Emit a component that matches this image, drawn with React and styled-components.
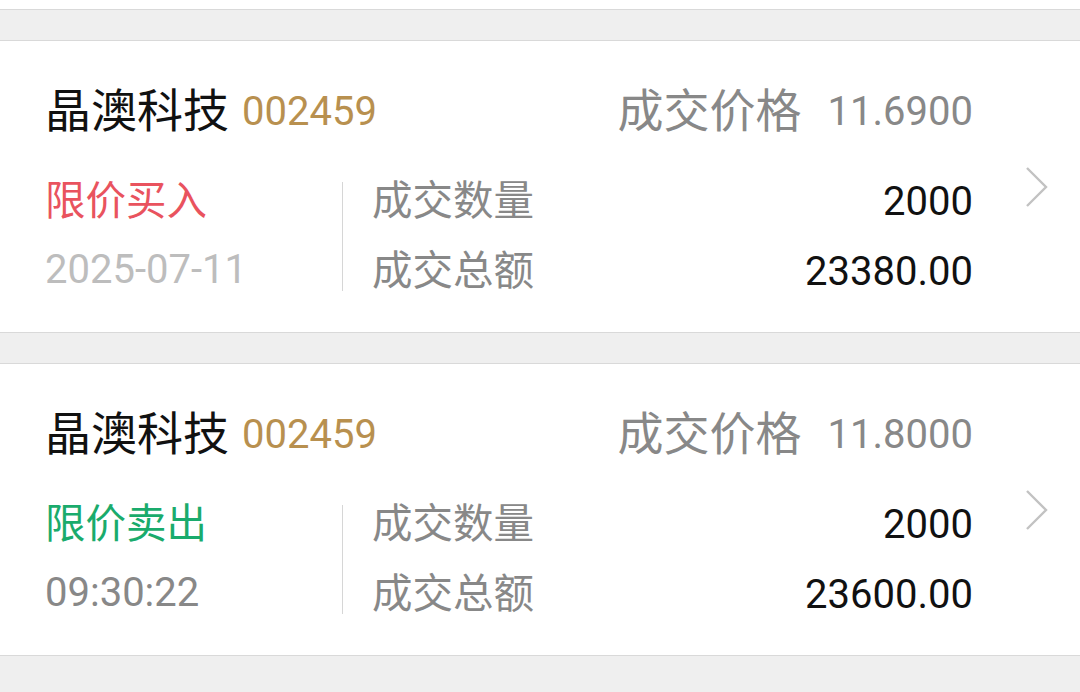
import React from "react";
import styled, { createGlobalStyle } from "styled-components";

const GlobalStyles = createGlobalStyle`
  html, body, #root {
    margin: 0;
    padding: 0;
    background: #efefef;
  }
  body {
    font-family: Roboto, "Noto Sans CJK SC", sans-serif;
    -webkit-font-smoothing: antialiased;
  }
`;

const List = styled.div`
  display: flex;
  flex-direction: column;
  gap: 30px;
  width: 1080px;
`;

// tail of the row scrolled above the viewport
const PrevTail = styled.div`
  height: 9px;
  background: #fff;
  border-bottom: 1px solid #d9d9d9;
`;

const Card = styled.div`
  display: flex;
  align-items: center;
  height: 291px;
  background: #fff;
  border-top: 1px solid #d9d9d9;
  border-bottom: 1px solid #d9d9d9;
  padding: 0 31px 0 45px;
`;

const Content = styled.div`
  flex: 1;
  display: flex;
  flex-direction: column;
  padding: 39px 0 27px;
`;

const Header = styled.div`
  display: flex;
  align-items: center;
  justify-content: space-between;
  height: 60px;
  margin-bottom: 25px;
`;

const Group = styled.div`
  display: flex;
  align-items: center;
  gap: ${(p) => p.$gap}px;
`;

// CJK ink sits a little low in its box, digits a little high; padding evens it out
const Cjk = styled.span`
  font-family: "Noto Sans CJK SC", sans-serif;
  font-weight: 400;
  line-height: 1;
  padding-bottom: ${(p) => p.$lift || 4}px;
`;

const Num = styled.span`
  font-family: Roboto, sans-serif;
  font-size: 40px;
  line-height: 1;
  padding-top: ${(p) => p.$drop || 0}px;
`;

const Name = styled(Cjk)`
  font-size: 46px;
  color: #111;
`;

const Code = styled(Num)`
  color: #b8904f;
`;

const PriceLabel = styled(Cjk)`
  font-size: 46px;
  color: #888;
`;

const PriceValue = styled(Num)`
  color: #888;
`;

const Body = styled.div`
  display: flex;
`;

const LeftCol = styled.div`
  width: 297px;
  display: flex;
  flex-direction: column;
`;

const Divider = styled.div`
  width: 1px;
  background: #d6d6d6;
  margin: 17px 0 14px;
`;

const RightCol = styled.div`
  flex: 1;
  padding-left: 29px;
  display: flex;
  flex-direction: column;
`;

const Line = styled.div`
  display: flex;
  align-items: center;
  justify-content: space-between;
  height: 70px;
`;

const Side = styled(Cjk)`
  font-size: 40.5px;
  color: ${(p) => (p.$buy ? "#e9535e" : "#1aab6c")};
`;

const Time = styled(Num)`
  color: ${(p) => (p.$muted ? "#bdbdbd" : "#888")};
`;

const FieldLabel = styled(Cjk)`
  font-size: 40.5px;
  color: #888;
`;

const FieldValue = styled(Num)`
  color: #111;
`;

const Chevron = styled.svg`
  width: 24px;
  height: 42px;
  margin-left: 52px;
  flex-shrink: 0;
`;

const trades = [
  { name: "晶澳科技", code: "002459", price: "11.6900", buy: true, side: "限价买入", time: "2025-07-11", mutedTime: true, qty: "2000", total: "23380.00" },
  { name: "晶澳科技", code: "002459", price: "11.8000", buy: false, side: "限价卖出", time: "09:30:22", mutedTime: false, qty: "2000", total: "23600.00" },
];

const TradeCard = ({ t }) => (
  <Card>
    <Content>
      <Header>
        <Group $gap={13}>
          <Name $lift={7}>{t.name}</Name>
          <Code $drop={3}>{t.code}</Code>
        </Group>
        <Group $gap={26}>
          <PriceLabel $lift={7}>成交价格</PriceLabel>
          <PriceValue $drop={3}>{t.price}</PriceValue>
        </Group>
      </Header>
      <Body>
        <LeftCol>
          <Line>
            <Side $buy={t.buy}>{t.side}</Side>
          </Line>
          <Line>
            <Time $muted={t.mutedTime}>{t.time}</Time>
          </Line>
        </LeftCol>
        <Divider />
        <RightCol>
          <Line>
            <FieldLabel>成交数量</FieldLabel>
            <FieldValue $drop={3}>{t.qty}</FieldValue>
          </Line>
          <Line>
            <FieldLabel>成交总额</FieldLabel>
            <FieldValue $drop={3}>{t.total}</FieldValue>
          </Line>
        </RightCol>
      </Body>
    </Content>
    <Chevron viewBox="0 0 24 42" fill="none">
      <polyline points="2,2 21,21 2,40" stroke="#c2c2c2" strokeWidth="2.4" />
    </Chevron>
  </Card>
);

export default function App() {
  return (
    <>
      <GlobalStyles />
      <List>
        <PrevTail />
        {trades.map((t, i) => (
          <TradeCard key={i} t={t} />
        ))}
      </List>
    </>
  );
}
